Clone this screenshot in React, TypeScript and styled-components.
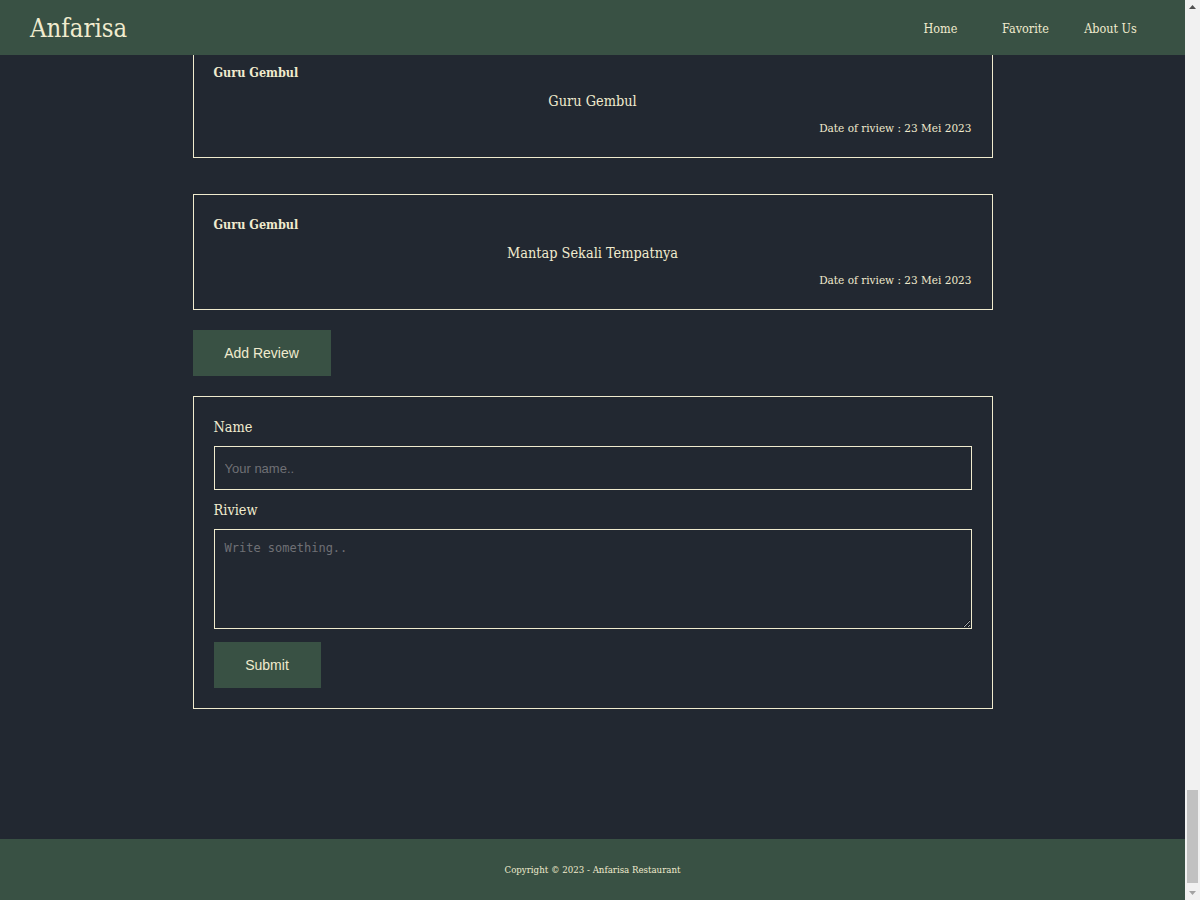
import React from "react";
import styled, { createGlobalStyle } from "styled-components";

const GlobalStyle = createGlobalStyle`
  html, body { overflow: hidden; }
  body {
    margin: 0 15px 0 0;
    background: #222831;
    color: #F0EBCE;
    font-family: "DejaVu Serif Condensed", "DejaVu Serif", serif;
  }
  * { box-sizing: border-box; }
`;

const Header = styled.header`
  position: fixed;
  top: 0;
  left: 0;
  right: 15px;
  height: 55px;
  background: #395144;
  display: flex;
  align-items: center;
  justify-content: space-between;
  padding: 0 32px 0 30px;
  z-index: 10;
`;

const Logo = styled.div`
  font-size: 25.5px;
  color: #F0EBCE;
  line-height: 1;
  margin-top: 2px;
`;

const Nav = styled.nav`
  display: flex;
  margin-top: 2px;
`;

const NavLink = styled.a`
  width: 85px;
  text-align: center;
  font-size: 12.5px;
  color: #F0EBCE;
  text-decoration: none;
`;

const Main = styled.main`
  width: 800px;
  margin: 0 auto;
  padding: 42px 0 130px;
  display: flex;
  flex-direction: column;
  align-items: flex-start;
`;

const ReviewCard = styled.div`
  width: 100%;
  border: 1px solid #F0EBCE;
  padding: 20px;
  display: flex;
  flex-direction: column;
  & + & { margin-top: 36px; }
`;

const ReviewName = styled.div`
  font-weight: bold;
  font-size: 12.5px;
  line-height: 19px;
`;

const ReviewText = styled.div`
  margin-top: 10px;
  text-align: center;
  font-size: 14.4px;
  line-height: 18px;
`;

const ReviewDate = styled.div`
  margin-top: 10px;
  text-align: right;
  font-size: 11.7px;
  line-height: 17px;
`;

const GreenButton = styled.button<{ $w: number }>`
  background: #395144;
  color: #F0EBCE;
  border: none;
  height: 46px;
  padding: 0;
  width: ${(p) => p.$w}px;
  font-family: "Liberation Sans", Arial, sans-serif;
  font-size: 14px;
  cursor: pointer;
`;

const AddWrap = styled.div`
  margin: 20px 0;
`;

const FormBox = styled.form`
  width: 100%;
  border: 1px solid #F0EBCE;
  padding: 20px;
  display: flex;
  flex-direction: column;
  align-items: flex-start;
`;

const Label = styled.label`
  display: block;
  font-size: 14.4px;
  line-height: 20px;
  margin-bottom: 9px;
  & ~ & { margin-top: 10px; }
`;

const TextInput = styled.input`
  display: block;
  width: 100%;
  height: 44px;
  background: transparent;
  border: 1px solid #F0EBCE;
  padding: 0 10px;
  color: #F0EBCE;
  font-family: "Liberation Sans", Arial, sans-serif;
  font-size: 13px;
  outline: none;
  &::placeholder { color: #6f7075; }
`;

const TextArea = styled.textarea`
  display: block;
  width: 100%;
  height: 100px;
  background: transparent;
  border: 1px solid #F0EBCE;
  padding: 11px 10px;
  color: #F0EBCE;
  font-family: "DejaVu Sans Mono", monospace;
  font-size: 12px;
  outline: none;
  margin-bottom: 13px;
  &::placeholder { color: #6f7075; }
`;

const Footer = styled.footer`
  height: 61px;
  background: #395144;
  display: flex;
  align-items: center;
  justify-content: center;
  font-size: 9.6px;
  color: #F0EBCE;
`;

const ScrollTrack = styled.div`
  position: fixed;
  top: 0;
  right: 0;
  width: 15px;
  height: 100%;
  background: #f1f1f1;
  display: flex;
  flex-direction: column;
  align-items: center;
  z-index: 20;
`;

const ScrollArrow = styled.svg`
  width: 15px;
  height: 15px;
  flex: none;
`;

const ScrollSpace = styled.div`
  flex: 1;
  display: flex;
  flex-direction: column;
  justify-content: flex-end;
  padding: 0 2px 2px;
  width: 100%;
`;

const ScrollThumb = styled.div`
  height: 93px;
  background: #c1c1c1;
`;

const reviews = [
  { name: "Guru Gembul", text: "Guru Gembul", date: "23 Mei 2023" },
  { name: "Guru Gembul", text: "Mantap Sekali Tempatnya", date: "23 Mei 2023" },
];

export default function App() {
  return (
    <>
      <GlobalStyle />
      <Header>
        <Logo>Anfarisa</Logo>
        <Nav>
          <NavLink href="#">Home</NavLink>
          <NavLink href="#">Favorite</NavLink>
          <NavLink href="#">About Us</NavLink>
        </Nav>
      </Header>
      <Main>
        {reviews.map((r, i) => (
          <ReviewCard key={i}>
            <ReviewName>{r.name}</ReviewName>
            <ReviewText>{r.text}</ReviewText>
            <ReviewDate>Date of riview : {r.date}</ReviewDate>
          </ReviewCard>
        ))}
        <AddWrap>
          <GreenButton type="button" $w={138}>Add Review</GreenButton>
        </AddWrap>
        <FormBox onSubmit={(e) => e.preventDefault()}>
          <Label htmlFor="name">Name</Label>
          <TextInput id="name" placeholder="Your name.." />
          <Label htmlFor="review">Riview</Label>
          <TextArea id="review" placeholder="Write something.." />
          <GreenButton type="submit" $w={107}>Submit</GreenButton>
        </FormBox>
      </Main>
      <Footer>Copyright © 2023 - Anfarisa Restaurant</Footer>
      <ScrollTrack aria-hidden="true">
        <ScrollArrow viewBox="0 0 15 15">
          <path d="M7.5 5 L11 9 L4 9 Z" fill="#505050" />
        </ScrollArrow>
        <ScrollSpace>
          <ScrollThumb />
        </ScrollSpace>
        <ScrollArrow viewBox="0 0 15 15">
          <path d="M7.5 10 L11 6 L4 6 Z" fill="#a3a3a3" />
        </ScrollArrow>
      </ScrollTrack>
    </>
  );
}
